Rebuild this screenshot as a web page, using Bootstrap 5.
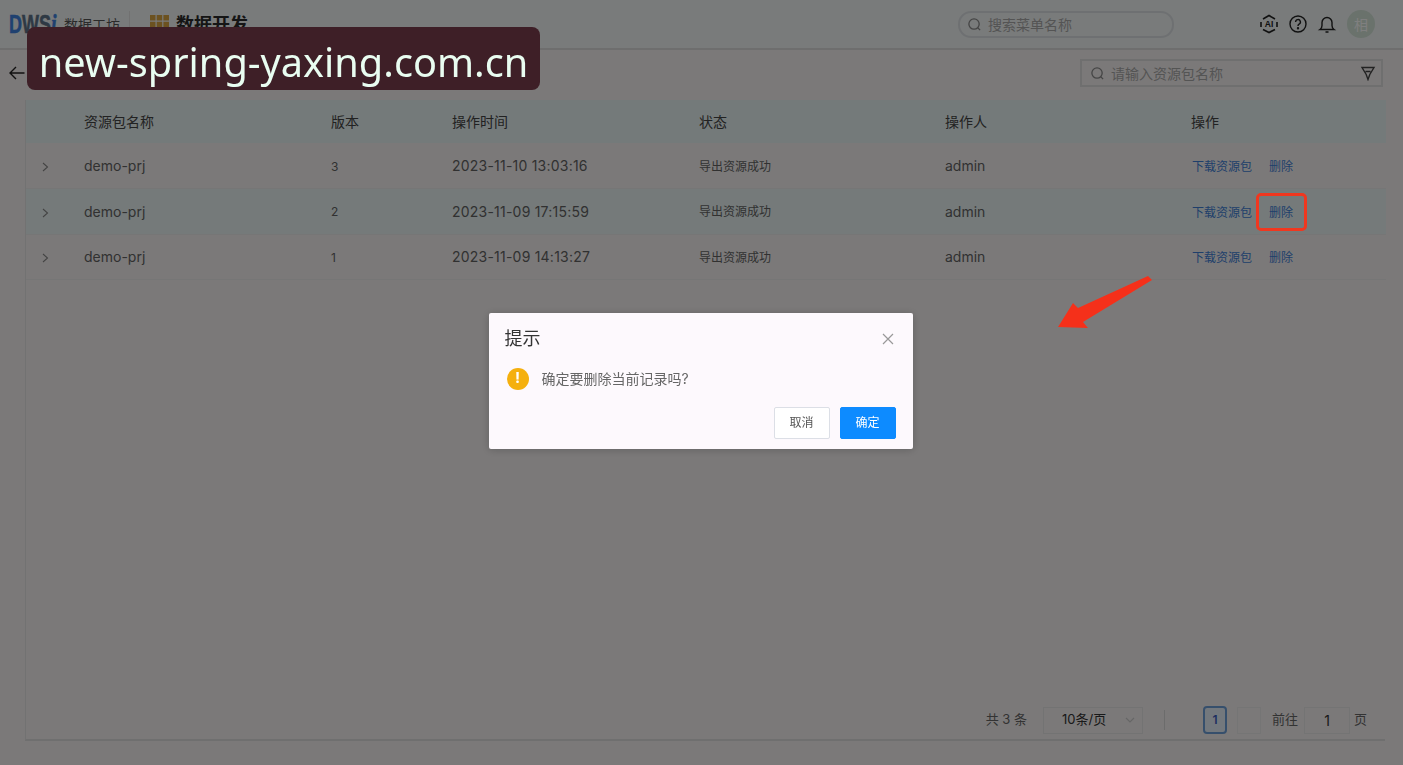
<!DOCTYPE html>
<html lang="zh-CN">
<head>
    <meta charset="UTF-8">
    <meta name="viewport" content="width=device-width, initial-scale=1.0">
    <title>数据开发</title>
    <link href="https://cdn.jsdelivr.net/npm/bootstrap@5.3.0/dist/css/bootstrap.min.css" rel="stylesheet">
    <style>
        html, body { height: 100%; overflow: hidden; }
        body { background: #f7f3f3; font-family: Inter, "Noto Sans CJK SC", sans-serif; color: #5e5e5e; font-size: 14px; }
        .app-shell { height: 765px; }
        .top-bar { height: 50px; background: #f2f6f6; border-bottom: 2px solid #dcdcdc; padding: 0 28px 0 9px; }
        .logo-mark { width: 55px; font-family: "Liberation Sans", sans-serif; font-weight: 700; font-size: 25px; color: #3f82e0; line-height: 1; white-space: nowrap; transform: scaleX(.72); transform-origin: left center; -webkit-text-stroke: .5px currentColor; }
        .logo-mark b { color: #5d7288; }
        .logo-mark i { font-family: "Liberation Serif", serif; color: #3f82e0; font-size: 28px; }
        .logo-name { font-size: 14px; color: #555; }
        .title-sep { width: 1px; height: 26px; background: #e2e2e2; margin: 0 20px 0 9px; }
        .page-name { font-size: 18px; font-weight: 700; color: #2a2a2a; margin-left: 7px; }
        .menu-search { width: 216px; height: 27px; margin-right: 85px; border: 2px solid #dde1e4; border-radius: 13px; padding-left: 7px; color: #a9a9a9; }
        .menu-search span { margin-left: -2px; }
        .user-face { width: 28px; height: 28px; border-radius: 50%; background: #d4e4d8; color: #fff; font-size: 14px; margin-left: 10px; }
        .head-ic + .head-ic { margin-left: 9px; }
        .tool-bar { height: 50px; padding: 0 20px 4px 9px; }
        .res-search { width: 303px; height: 28px; border: 2px solid #dedede; padding: 0 5px 0 8px; color: #a9a9a9; font-size: 14px; }
        .res-search span { margin-left: -2px; }
        .table-wrap { margin: 0 18px 0 25px; border-left: 1px solid #e4e4e4; flex: 1 1 0; }
        .res-table { table-layout: fixed; width: 1360px; margin: 0; --bs-table-bg: transparent; color: #5e5e5e; }
        .res-table th { height: 43px; background: #e9f4f4; font-weight: 400; color: #444; font-size: 14px; vertical-align: middle; border: 0; padding: 0 12px; }
        .res-table td { height: 45.5px; vertical-align: middle; font-size: 14px; padding: 0 12px; border-bottom: 1px solid #ededed; color: #636363; }
        .res-table td:first-child { padding-left: 16px; }
        .res-table tr.row-hover td { background: #eaf5f5; }
        .res-table .cell-sm { font-size: 12px; padding-top: 2px; }
        .res-table .cell-time { letter-spacing: .22px; }
        .res-table .cell-act { padding-left: 13px; }
        .res-table .link-act { color: #3f7fd6; font-size: 12px; text-decoration: none; margin-right: 17px; }
        .col-arrow { width: 46px; }
        .col-name { width: 247px; }
        .col-ver { width: 121px; }
        .col-wide { width: 246px; }
        .pager-bar { height: 40px; margin: 0 18px 24px 25px; border-left: 1px solid #e4e4e4; border-bottom: 2px solid #dedede; padding-right: 18px; font-size: 13px; color: #666; }
        .size-pick { width: 100px; height: 27px; border: 1px solid #e6e6e6; margin-left: 16px; padding: 0 7px 0 18px; color: #333; }
        .pager-sep { width: 1px; height: 20px; background: #d8d8d8; margin: 0 38px 0 21px; }
        .page-on { width: 24px; height: 28px; border: 2px solid #6d9fd8; border-radius: 4px; color: #3b5fc0; font-weight: 600; font-size: 12px; background: #e6f0fb; }
        .page-next { width: 24px; height: 27px; border: 1px solid #eaeaea; margin: 0 11px 0 10px; }
        .page-jump { width: 46px; height: 27px; border: 1px solid #e8e8e8; margin: 0 4px 0 6px; color: #333; font-size: 14px; }
        .scrim { position: fixed; inset: 0; background: rgba(0, 0, 0, .5); z-index: 10; }
        .msg-box { width: 424px; height: 136px; margin: -4px 2px 0 0; background: #fdf9fd; border-radius: 2px; padding: 14px 17px 10px 16px; box-shadow: 0 1px 8px rgba(0,0,0,.2); }
        .msg-title { font-size: 18px; color: #333; line-height: 24px; }
        .msg-close { margin-right: 2px; }
        .msg-text { font-size: 14px; color: #666; margin-top: 16px; height: 24px; }
        .msg-icon { width: 22px; height: 22px; border-radius: 50%; background: #f5b00e; color: #fff; font-weight: 700; font-size: 15px; margin: 0 13px 0 2px; }
        .msg-btn { width: 56px; height: 32px; font-size: 12px; border-radius: 2px; padding: 0; font-family: inherit; }
        .msg-btns { column-gap: 10px; }
        .btn-off { background: #fff; border: 1px solid #dcdfe6; color: #555; }
        .btn-ok { background: #0d8bff; border: 1px solid #0d8bff; color: #fff; }
        .red-box { position: fixed; left: 1256px; top: 193px; width: 51px; height: 38px; border: 3px solid #f0371f; border-radius: 5px; z-index: 20; }
        .red-arrow { position: fixed; left: 1055px; top: 272px; z-index: 20; }
        .site-stamp { position: fixed; left: 27px; top: 27px; width: 513px; height: 63px; padding-top: 8px; background: #3e1f27; border-radius: 8px; color: #e9fdf1; font-family: "Noto Sans", sans-serif; font-size: 39.7px; z-index: 30; }
    </style>
</head>
<body>
    <div class="app-shell d-flex flex-column">
        <!-- header -->
        <header class="top-bar d-flex align-items-center">
            <span class="logo-mark">D<b>WS</b><i>i</i></span>
            <span class="logo-name">数据工坊</span>
            <span class="title-sep"></span>
            <svg width="19" height="19" viewBox="0 0 19 19"><path fill="#d9a441" d="M0 0h5.500v5.500H0zM6.700 0h5.500v5.500H6.700zM13.400 0H19v5.500h-5.600zM0 6.700h5.500v5.500H0zM6.700 6.700h5.500v5.500H6.700zM13.400 6.700H19v5.500h-5.600z"/><path fill="#c98a1d" d="M0 13.400h5.500V19H0zM6.700 13.400h5.500V19H6.700zM13.400 13.400H19V19h-5.600z"/></svg>
            <span class="page-name">数据开发</span>
            <div class="ms-auto menu-search d-flex align-items-center gap-2">
                <svg width="15" height="15" viewBox="0 0 16 16" fill="none" stroke="#8a8a8a" stroke-width="1.400"><circle cx="7.500" cy="7.500" r="5.500"/><path d="M11.500 11.500l2.500 2.500"/></svg>
                <span>搜索菜单名称</span>
            </div>
            <div class="d-flex align-items-center">
                <svg class="head-ic" width="20" height="20" viewBox="0 0 20 20" fill="none" stroke="#222" stroke-width="1.600"><path d="M4 5L10 1.500 16 5M18 8v5M16 15.500l-6 3-6-3M2 13V8"/><text x="10" y="13" text-anchor="middle" font-size="8.500" font-weight="700" fill="#222" stroke="none" font-family="Liberation Sans">AI</text></svg>
                <svg class="head-ic" width="20" height="20" viewBox="0 0 20 20" fill="none" stroke="#222" stroke-width="1.400"><circle cx="10" cy="10" r="8"/><path d="M7.600 8a2.400 2.400 0 1 1 3.500 2.100c-.8.500-1.100.9-1.100 1.800"/><circle cx="10" cy="14.300" r=".5" fill="#222"/></svg>
                <svg class="head-ic" width="20" height="20" viewBox="0 0 20 20" fill="none" stroke="#222" stroke-width="1.400"><path d="M3 15.500c1.500-1 2-2 2-4V8.500a5 5 0 0 1 10 0v3c0 2 .5 3 2 4zM8.500 18h3"/></svg>
                <span class="user-face d-flex align-items-center justify-content-center">相</span>
            </div>
        </header>

        <!-- toolbar -->
        <div class="tool-bar d-flex align-items-center justify-content-between">
            <svg width="16" height="14" viewBox="0 0 16 14" fill="none" stroke="#222" stroke-width="1.400"><path d="M15.500 7H1M7 1L1 7l6 6"/></svg>
            <div class="res-search d-flex align-items-center gap-2">
                <svg width="15" height="15" viewBox="0 0 16 16" fill="none" stroke="#8a8a8a" stroke-width="1.400"><circle cx="7.500" cy="7.500" r="5.500"/><path d="M11.500 11.500l2.500 2.500"/></svg>
                <span>请输入资源包名称</span>
                <svg class="ms-auto" width="16" height="16" viewBox="0 0 16 16" fill="none" stroke="#444" stroke-width="1.400"><path d="M2 2.500h12L9.800 9.500 8 14.500 6.200 9.500zM5.500 6.500h5"/></svg>
            </div>
        </div>

        <!-- table -->
        <div class="table-wrap">
            <table class="table res-table">
                <colgroup>
                    <col class="col-arrow"><col class="col-name"><col class="col-ver"><col class="col-name"><col class="col-wide"><col class="col-wide"><col>
                </colgroup>
                <thead>
                    <tr><th></th><th>资源包名称</th><th>版本</th><th>操作时间</th><th>状态</th><th>操作人</th><th>操作</th></tr>
                </thead>
                <tbody id="rows"></tbody>
            </table>
        </div>

        <!-- pagination -->
        <div class="pager-bar d-flex align-items-center justify-content-end">
            <span>共 3 条</span>
            <div class="size-pick d-flex align-items-center justify-content-between">
                <span>10条/页</span>
                <svg width="10" height="6" viewBox="0 0 10 6" fill="none" stroke="#ccc" stroke-width="1.200"><path d="M1 1l4 4 4-4"/></svg>
            </div>
            <span class="pager-sep"></span>
            <span class="page-on d-flex align-items-center justify-content-center">1</span>
            <span class="page-next"></span>
            <span>前往</span>
            <span class="page-jump d-flex align-items-center justify-content-center">1</span>
            <span>页</span>
        </div>
    </div>

    <!-- confirm dialog -->
    <div class="scrim d-flex align-items-center justify-content-center">
        <div class="msg-box d-flex flex-column">
            <div class="d-flex justify-content-between align-items-center">
                <span class="msg-title">提示</span>
                <svg class="msg-close" width="12" height="12" viewBox="0 0 12 12" fill="none" stroke="#999" stroke-width="1.200"><path d="M1 1l10 10M11 1L1 11"/></svg>
            </div>
            <div class="msg-text d-flex align-items-center">
                <span class="msg-icon d-flex align-items-center justify-content-center">!</span>
                <span>确定要删除当前记录吗?</span>
            </div>
            <div class="msg-btns d-flex justify-content-end mt-auto">
                <button type="button" class="btn msg-btn btn-off">取消</button>
                <button type="button" class="btn msg-btn btn-ok">确定</button>
            </div>
        </div>
    </div>

    <!-- annotations -->
    <div class="red-box"></div>
    <svg class="red-arrow" width="100" height="60" viewBox="0 0 100 60"><path fill="#f5301a" d="M93 4L97 8 28 50 33 56 3 55 18 31 23 36z"/></svg>
    <div class="site-stamp d-flex align-items-center justify-content-center">new-spring-yaxing.com.cn</div>

    <script>
        const data = [
            { ver: 3, time: '2023-11-10 13:03:16' },
            { ver: 2, time: '2023-11-09 17:15:59', hover: true },
            { ver: 1, time: '2023-11-09 14:13:27' }
        ];
        document.getElementById('rows').innerHTML = data.map(r => `
            <tr class="${r.hover ? 'row-hover' : ''}">
                <td><svg width="7" height="10" viewBox="0 0 7 10" fill="none" stroke="#888" stroke-width="1.100"><path d="M1 1l4.500 4L1 9"/></svg></td>
                <td>demo-prj</td>
                <td class="cell-sm">${r.ver}</td>
                <td class="cell-time">${r.time}</td>
                <td class="cell-sm">导出资源成功</td>
                <td>admin</td>
                <td class="cell-act"><a class="link-act" href="#">下载资源包</a><a class="link-act" href="#">删除</a></td>
            </tr>`).join('');
    </script>
    <script src="https://cdn.jsdelivr.net/npm/bootstrap@5.3.0/dist/js/bootstrap.bundle.min.js"></script>
</body>
</html>
